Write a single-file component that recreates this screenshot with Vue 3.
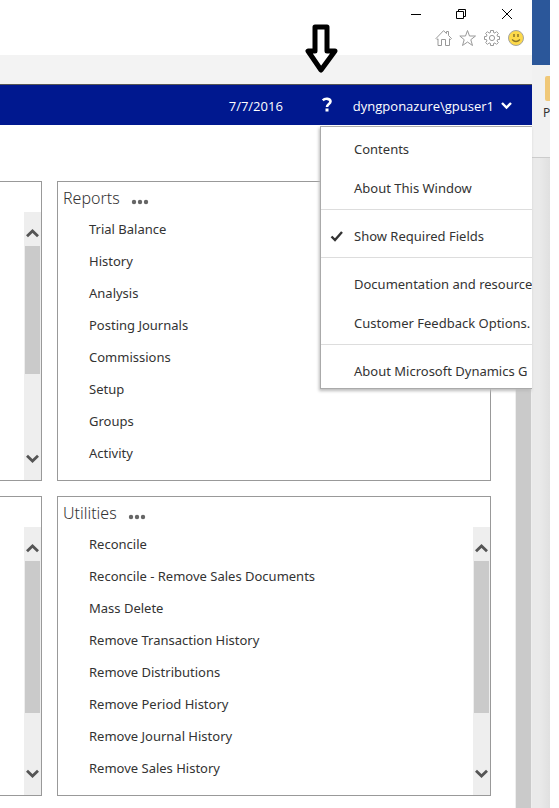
<script setup>
const reports = ['Trial Balance', 'History', 'Analysis', 'Posting Journals', 'Commissions', 'Setup', 'Groups', 'Activity']
const utilities = [
  'Reconcile',
  'Reconcile - Remove Sales Documents',
  'Mass Delete',
  'Remove Transaction History',
  'Remove Distributions',
  'Remove Period History',
  'Remove Journal History',
  'Remove Sales History',
]
const rows = [
  { title: 'Reports', items: reports, scroll: false, thumb: 128 },
  { title: 'Utilities', items: utilities, scroll: true, thumb: 152 },
]
const menu = [
  { label: 'Contents' },
  { label: 'About This Window' },
  { label: 'Show Required Fields', section: true, checked: true },
  { label: 'Documentation and resource', section: true },
  { label: 'Customer Feedback Options.' },
  { label: 'About Microsoft Dynamics G', section: true },
]
</script>

<template>
  <div class="desktop">
    <div class="browser">
      <header class="chrome">
        <div class="window-controls">
          <button type="button" aria-label="Minimize">
            <svg width="12" height="12" viewBox="0 0 12 12"><path d="M2 6.500H12" /></svg>
          </button>
          <button type="button" aria-label="Restore">
            <svg width="12" height="12" viewBox="0 0 12 12"><path d="M1.500 3.500H8.500V10.500H1.500ZM3.500 3.500V1.500H10.500V8.500H8.500" /></svg>
          </button>
          <button type="button" aria-label="Close">
            <svg width="12" height="12" viewBox="0 0 12 12"><path d="M1 1L11 11M11 1L1 11" /></svg>
          </button>
        </div>
        <div class="tools">
          <button type="button" aria-label="Home">
            <svg width="18" height="18" viewBox="0 0 18 18"><path d="M1 9.500L8.500 1.700L11.500 4.500V2.500H13.500V6.500L16.500 9.500L15.500 10.500L14.500 9.800V16.500H10.500V10.500H6.500V16.500H3V9.800L2 10.500Z" /></svg>
          </button>
          <button type="button" aria-label="Favorites">
            <svg width="18" height="18" viewBox="0 0 18 18"><path d="M8.500 1.500L10.500 7H16.500L11.800 10.700L13.500 16.500L8.500 13L3.500 16.500L5.200 10.700L0.800 7H6.500Z" /></svg>
          </button>
          <button type="button" aria-label="Settings">
            <svg width="18" height="18" viewBox="0 0 18 18">
              <path d="M7.500 1.500H10.500V3.500L12 4.100L13.500 2.600L15.400 4.500L14 6L14.600 7.500H16.500V10.500H14.600L14 12L15.400 13.500L13.500 15.400L12 13.900L10.500 14.500V16.500H7.500V14.500L6 13.900L4.500 15.400L2.600 13.500L4 12L3.400 10.500H1.500V7.500H3.400L4 6L2.600 4.500L4.500 2.600L6 4.100L7.500 3.500Z" />
              <circle cx="9" cy="9" r="2.600" />
            </svg>
          </button>
          <button type="button" aria-label="Send a smile">
            <svg width="18" height="18" viewBox="0 0 18 18">
              <circle cx="9" cy="9" r="7.500" fill="#fdd94a" stroke="#a5a5a0" />
              <path d="M7 5V8M11 5V8" stroke="#8a7428" stroke-width="1.500" />
              <path d="M5 10.500Q9 14.500 13 10.500" stroke="#8a7428" stroke-width="1.200" />
            </svg>
          </button>
        </div>
      </header>
      <div class="strip"></div>

      <nav class="appbar">
        <span class="date">7/7/2016</span>
        <button type="button" class="help" aria-label="Help">
          <svg width="12" height="16" viewBox="0 0 12 16">
            <path d="M1.800 3.300C4 1 9.500 1.300 9.500 4.500C9.500 7 6 7 6 10" fill="none" stroke="#fff" stroke-width="2.600" />
            <rect x="4.500" y="11.500" width="3" height="3" fill="#fff" />
          </svg>
        </button>
        <button type="button" class="user">
          dyngponazure\gpuser1
          <svg width="12" height="10" viewBox="0 0 12 10"><path d="M2 2L6.500 6.500L11 2" fill="none" stroke="#fff" stroke-width="2.400" /></svg>
        </button>
        <ul class="menu">
          <li v-for="m in menu" :key="m.label" :class="{ section: m.section }">
            <button type="button">
              <span class="mark">
                <svg v-if="m.checked" width="14" height="12" viewBox="0 0 14 12"><path d="M1.500 6.500L5 10L12 2" fill="none" stroke="#333" stroke-width="2.400" /></svg>
              </span>{{ m.label }}
            </button>
          </li>
        </ul>
      </nav>

      <div class="page">
        <main class="grid">
          <template v-for="row in rows" :key="row.title">
            <section class="panel side">
              <div class="scrollbar">
                <button type="button" aria-label="Scroll up"><svg width="14" height="10" viewBox="0 0 14 10"><path d="M1 8.300L6.500 3L12 8.300" /></svg></button>
                <div class="thumb" :style="{ height: row.thumb + 'px' }"></div>
                <button type="button" class="down" aria-label="Scroll down"><svg width="14" height="10" viewBox="0 0 14 10"><path d="M1 2.700L6.500 8L12 2.700" /></svg></button>
              </div>
            </section>
            <section class="panel">
              <h2>
                {{ row.title }}
                <button type="button" aria-label="More">
                  <svg width="18" height="6" viewBox="0 0 18 6"><circle cx="3" cy="3" r="2.200" /><circle cx="9" cy="3" r="2.200" /><circle cx="15" cy="3" r="2.200" /></svg>
                </button>
              </h2>
              <div class="body">
                <ul class="links">
                  <li v-for="item in row.items" :key="item"><a href="#">{{ item }}</a></li>
                </ul>
                <div v-if="row.scroll" class="scrollbar">
                  <button type="button" aria-label="Scroll up"><svg width="14" height="10" viewBox="0 0 14 10"><path d="M1 8.300L6.500 3L12 8.300" /></svg></button>
                  <div class="thumb" :style="{ height: row.thumb + 'px' }"></div>
                  <button type="button" class="down" aria-label="Scroll down"><svg width="14" height="10" viewBox="0 0 14 10"><path d="M1 2.700L6.500 8L12 2.700" /></svg></button>
                </div>
              </div>
            </section>
          </template>
        </main>
        <div class="page-scroll"></div>
      </div>

      <svg class="pointer" width="34" height="52" viewBox="0 0 34 52">
        <path d="M10 4H22V28H30L16 47L3 28H10Z" fill="#fff" stroke="#000" stroke-width="5" stroke-linejoin="round" />
      </svg>
    </div>

    <aside class="behind">
      <div class="behind-title"></div>
      <div class="ribbon">
        <div class="folder"></div>
        <span>P</span>
      </div>
      <div class="behind-body"></div>
    </aside>
  </div>
</template>

<style>
body {
  background: #fff;
}
</style>

<style scoped>
.desktop {
  display: flex;
  min-height: 100vh;
  padding-right: 9px;
  font-family: "Noto Sans", "Open Sans", sans-serif;
  font-size: 13px;
  color: #333;
}
button {
  display: flex;
  align-items: center;
  padding: 0;
  border: 0;
  background: none;
  font: inherit;
  color: inherit;
}
ul {
  margin: 0;
  padding: 0;
  list-style: none;
}
.browser {
  position: relative;
  display: flex;
  flex: 1;
  flex-direction: column;
  min-width: 0;
  background: #fff;
}
.chrome {
  display: flex;
  flex-direction: column;
  align-items: flex-end;
  gap: 9px;
  padding: 8px 7px 8px 0;
}
.window-controls {
  display: flex;
  gap: 34px;
  padding-right: 12px;
}
.window-controls svg {
  fill: none;
  stroke: #000;
}
.tools {
  display: flex;
  gap: 6px;
}
.tools svg {
  fill: none;
  stroke: #999;
}
.strip {
  height: 29px;
  border-bottom: 1px solid #555;
  background: #f3f3f3;
}
.appbar {
  position: relative;
  display: flex;
  align-items: center;
  justify-content: flex-end;
  height: 40px;
  padding-right: 20px;
  background: #00188f;
  color: #fff;
}
.date,
.user {
  padding-top: 2px;
  font-family: "Open Sans", "Noto Sans", sans-serif;
}
.help {
  margin: 0 20px 0 38px;
}
.user {
  gap: 6px;
}
.menu {
  position: absolute;
  z-index: 1;
  top: 41px;
  right: 0;
  width: 211px;
  padding-top: 5px;
  overflow: hidden;
  border: 1px solid #aaa;
  border-right: 0;
  background: #fff;
  box-shadow: -1px 2px 3px #bbb;
  color: #333;
}
.menu button {
  height: 34px;
  white-space: nowrap;
}
.menu li + li {
  padding-top: 5px;
}
.menu li.section {
  margin-top: 4px;
  padding-top: 9px;
  border-top: 1px solid #ddd;
}
.mark {
  display: flex;
  width: 24px;
  padding-left: 9px;
}
.page {
  display: flex;
  flex: 1;
}
.grid {
  display: grid;
  flex: 1;
  grid-template-columns: 42px 1fr;
  align-content: start;
  gap: 15px;
  padding: 56px 24px 12px 0;
}
.panel {
  display: flex;
  flex-direction: column;
  border: 1px solid #999;
}
.side {
  align-items: flex-end;
  padding-top: 30px;
  border-left: 0;
}
h2 {
  display: flex;
  align-items: center;
  gap: 11px;
  height: 30px;
  margin: 0;
  padding: 2px 5px 0;
  box-sizing: border-box;
  font-size: 16px;
  font-weight: 300;
}
h2 button {
  padding-top: 8px;
}
h2 svg {
  fill: #666;
}
.body {
  display: flex;
}
.links {
  flex: 1;
  padding: 1px 0 11px 31px;
}
.links li {
  height: 32px;
  line-height: 32px;
}
a {
  color: inherit;
  text-decoration: none;
}
.scrollbar {
  display: flex;
  flex: 1;
  flex-direction: column;
  width: 17px;
  background: #eee;
}
.body .scrollbar {
  flex: 0 0 17px;
}
.scrollbar button {
  justify-content: center;
  height: 34px;
  padding-top: 8px;
}
.scrollbar .down {
  height: 44px;
  margin-top: auto;
  padding: 0;
}
.scrollbar svg {
  fill: none;
  stroke: #555;
  stroke-width: 2.800;
}
.thumb {
  margin: 0 1px;
  background: #cacaca;
}
.page-scroll {
  width: 15px;
  margin-top: 34px;
  border: 1px solid #eee;
  border-width: 0 1px;
  background: #cacaca;
}
.pointer {
  position: absolute;
  top: 23px;
  right: 193px;
}
.behind {
  display: flex;
  flex-direction: column;
  width: 18px;
  overflow: hidden;
}
.behind-title {
  height: 65px;
  background: #2b579a;
}
.ribbon {
  display: flex;
  flex-direction: column;
  gap: 3px;
  height: 81px;
  padding: 11px 0 0 11px;
  border-bottom: 1px solid #ccc;
  background: #f1f1f1;
  font-size: 12px;
}
.folder {
  height: 25px;
  margin-left: 2px;
  border-radius: 2px 0 0 2px;
  background: #f0c878;
}
.behind-body {
  flex: 1;
  background: linear-gradient(90deg, #eaeaea 40%, #e0e0e0);
}
</style>
